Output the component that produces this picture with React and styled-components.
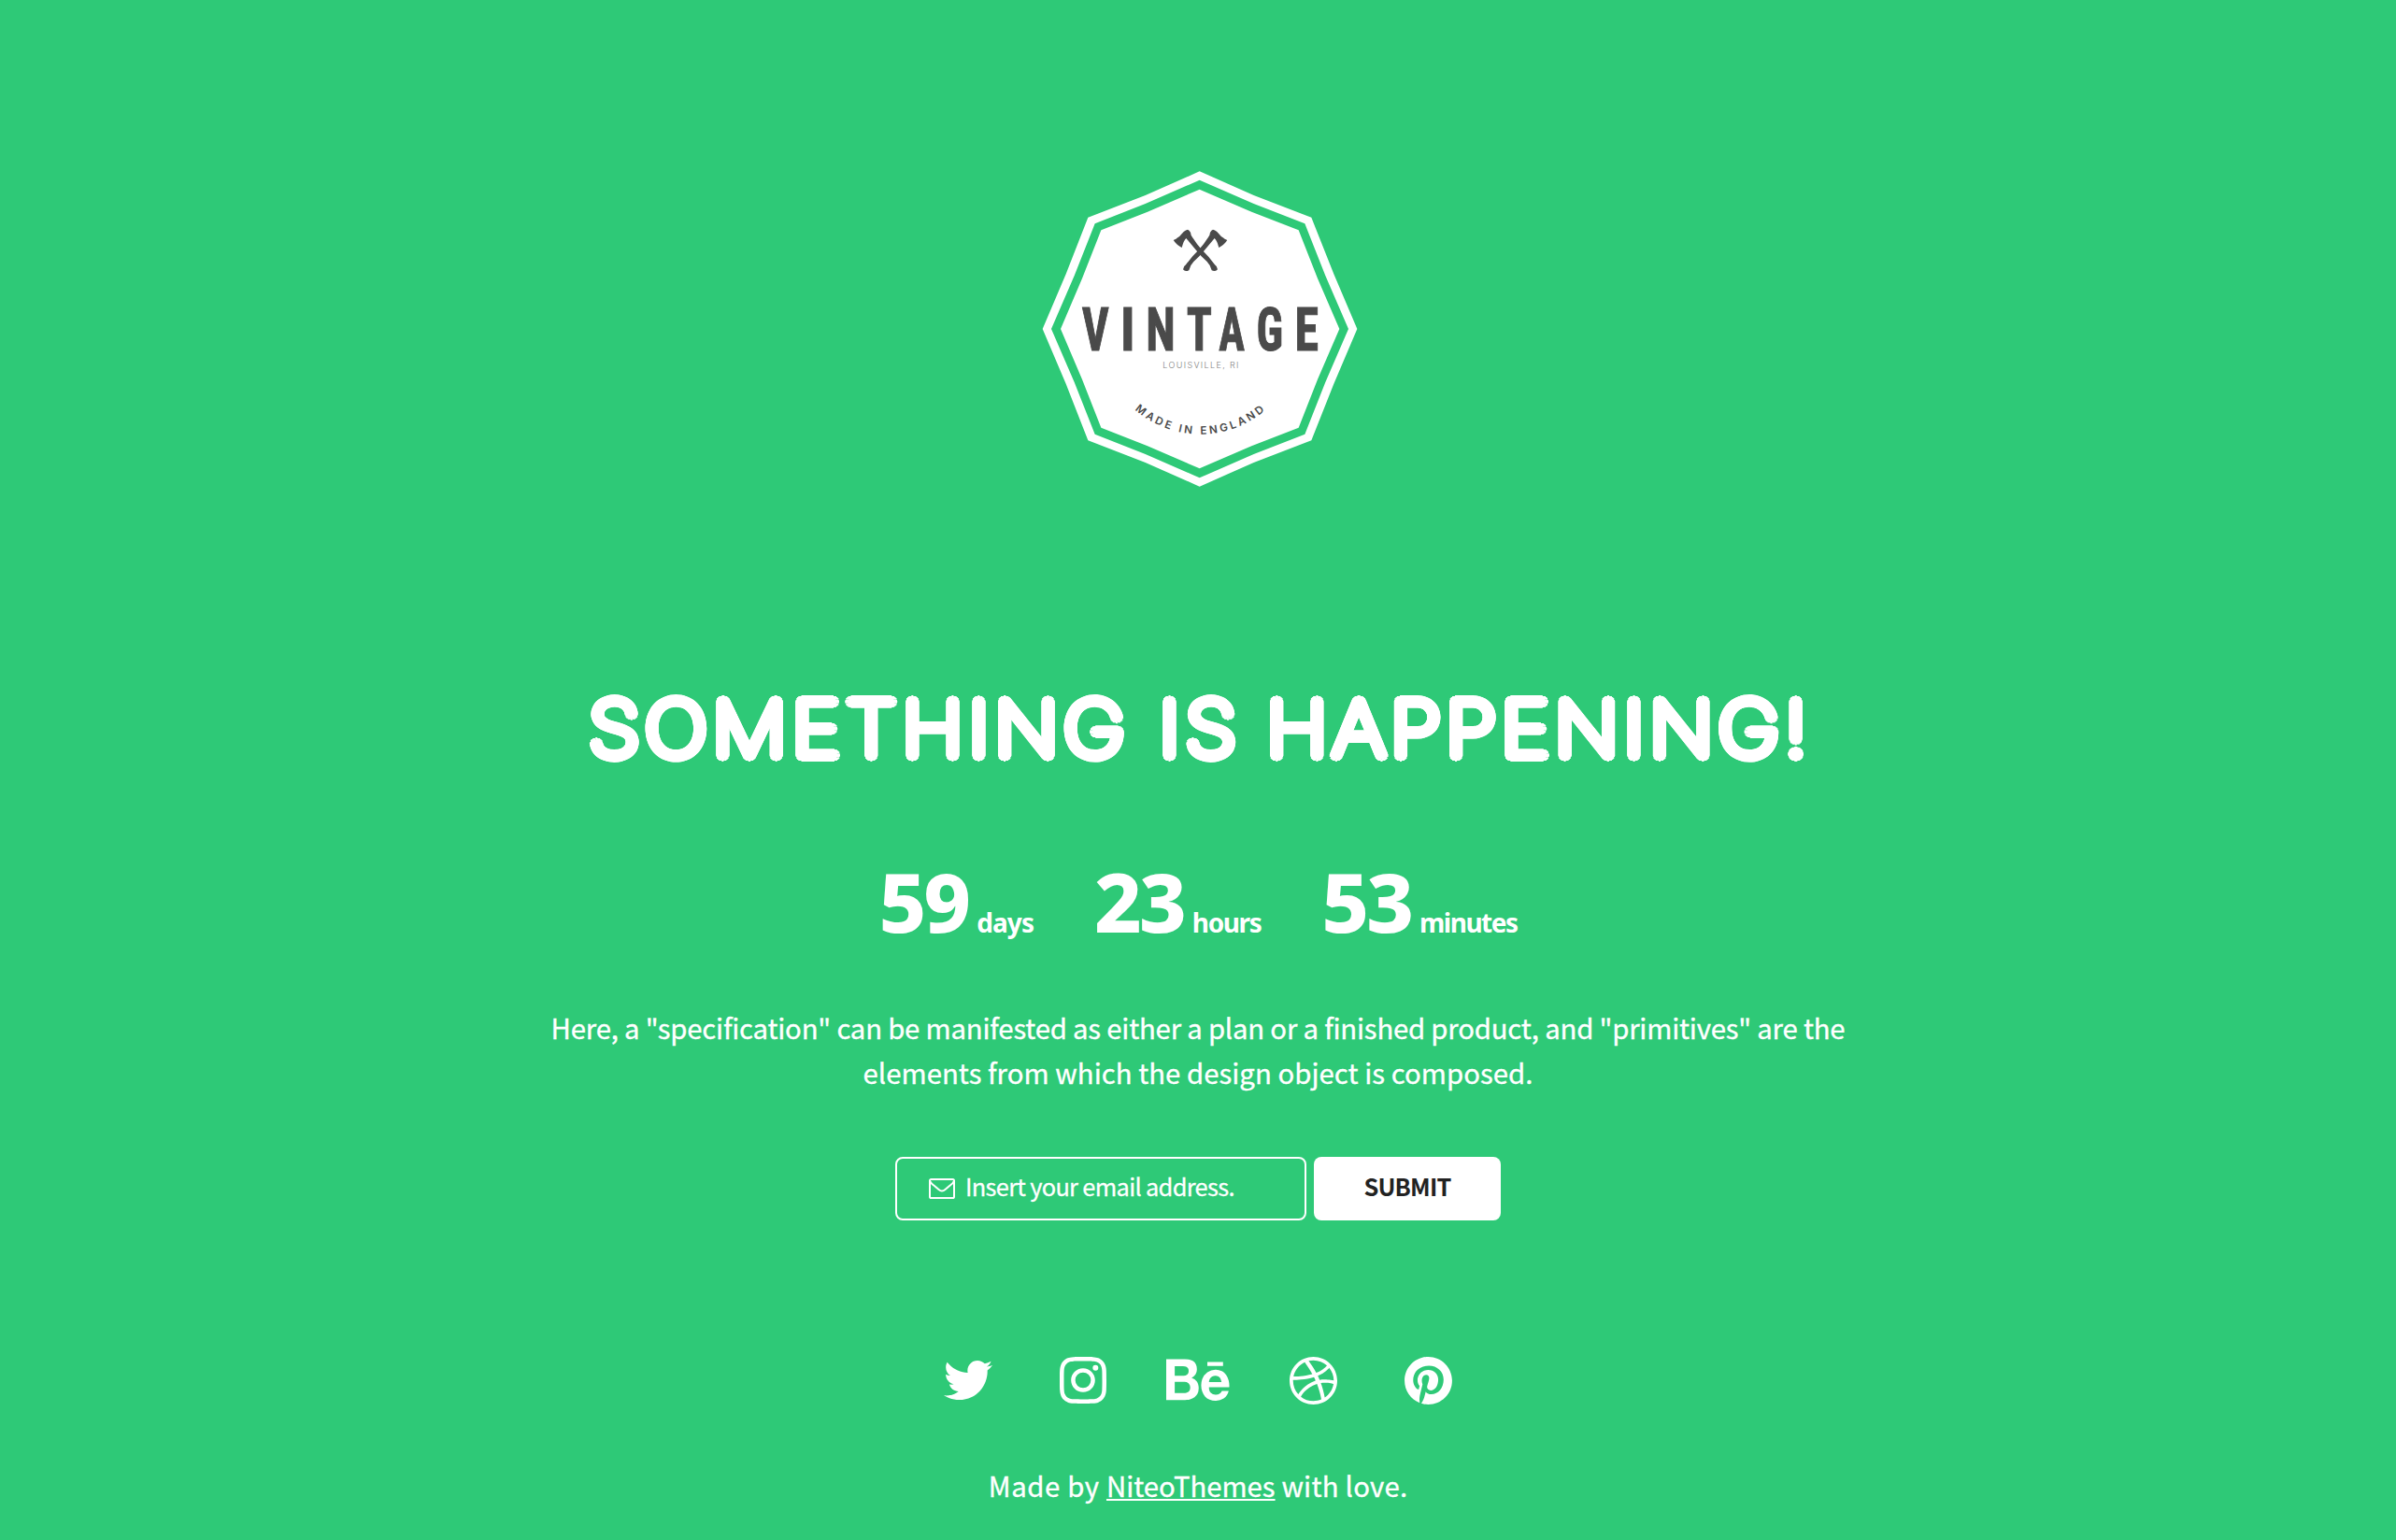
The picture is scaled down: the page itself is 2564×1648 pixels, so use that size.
import React from "react";
import styled, { createGlobalStyle } from "styled-components";
import { SiInstagram, SiBehance, SiDribbble, SiPinterest } from "react-icons/si";
import { FaTwitter } from "react-icons/fa";

const GREEN = "#2ec977";
const DARK = "#4a4a4a";

const GlobalStyle = createGlobalStyle`
  * { box-sizing: border-box; }
  body {
    margin: 0;
    background: ${GREEN};
    color: #fff;
    font-family: "Noto Sans CJK JP", "Noto Sans", sans-serif;
  }
  a { color: inherit; }
`;

const Page = styled.main`
  display: flex;
  flex-direction: column;
  align-items: center;
  min-height: 1648px;
  padding-top: 170px;
`;

const LogoSvg = styled.svg`
  display: block;
  width: 368px;
  height: 360px;
`;

/* Rounded strokes: a hairline face thickened evenly in every direction. */
const ring = (radius) =>
  Array.from({ length: 24 }, (_, i) => {
    const angle = (i * Math.PI) / 12;
    return `${(radius * Math.cos(angle)).toFixed(2)}px ${(radius * Math.sin(angle)).toFixed(2)}px 0 #fff`;
  }).join(", ");

const Title = styled.h1`
  display: flex;
  margin: 200px 0 0;
  font: 100 81.5px/100px Inter, sans-serif;
  text-shadow: ${ring(5.6)}, ${ring(2.8)};
  transform: scaleX(1.09);
`;

const Word = styled.span`
  letter-spacing: ${(p) => p.$spacing}px;
  margin-right: ${(p) => (p.$after || 0) - p.$spacing}px;
`;

const Counter = styled.div`
  display: flex;
  gap: 65px;
  height: 100px;
  margin-top: 84px;
  font-family: "Noto Sans", sans-serif;
`;

const Unit = styled.div`
  display: flex;
  align-items: baseline;
  gap: 9px;
`;

const Amount = styled.span`
  font-size: 88px;
  font-weight: 800;
  line-height: 100px;
  letter-spacing: -3px;
`;

const UnitName = styled.span`
  font-size: 28px;
  font-weight: 700;
  line-height: 32px;
  letter-spacing: ${(p) => p.$spacing}px;
`;

const Intro = styled.p`
  margin: 61px 0 0;
  text-align: center;
  font-size: 29.3px;
  line-height: 48px;
  -webkit-text-stroke: 0.35px #fff;
`;

const Line = styled.span`
  display: block;
  letter-spacing: ${(p) => p.$spacing}px;
`;

const Form = styled.form`
  display: flex;
  gap: 8px;
  margin-top: 67px;
`;

const Field = styled.label`
  display: flex;
  align-items: center;
  gap: 11px;
  width: 440px;
  height: 68px;
  padding-left: 34px;
  border: 2px solid #fff;
  border-radius: 8px;
  font-size: 25.4px;
  letter-spacing: -0.68px;
  -webkit-text-stroke: 0.3px #fff;
`;

const Placeholder = styled.span`
  padding-bottom: 6px;
`;

const Submit = styled.button`
  width: 200px;
  height: 68px;
  padding: 0 0 6px;
  border: 0;
  border-radius: 8px;
  background: #fff;
  color: #222;
  font: 700 25.4px/62px "Noto Sans CJK JP", "Noto Sans", sans-serif;
  letter-spacing: -0.8px;
`;

const Social = styled.nav`
  display: flex;
  margin-top: 146px;
`;

const SocialLink = styled.a`
  display: flex;
  align-items: center;
  justify-content: center;
  width: 123px;
  height: 50px;
`;

const Footer = styled.footer`
  margin-top: 63px;
  font-size: 29.3px;
  line-height: 48px;
  letter-spacing: 0.25px;
  -webkit-text-stroke: 0.35px #fff;

  a {
    letter-spacing: 0;
    text-decoration-thickness: 2px;
    text-underline-offset: 2px;
    text-decoration-skip-ink: none;
  }
`;

const Lead = styled.span`
  letter-spacing: 0.65px;
`;

const AXE =
  "M513 227 Q518 229 522 236 L524 245 Q540 272 557 290 Q581 313 600 340 Q610 347 608 356 Q600 363 590 358 Q586 341 575 330 Q554 311 540 293 L508 255 Q500 262 494 285 Q479 278 467 261 Q487 252 500 234 Q507 228 513 227 Z";

/* Each letter of the wordmark: glyph, centre and horizontal scale. */
const WORDMARK = [
  ["V", 216.5, 0.78],
  ["I", 320.5, 0.9],
  ["N", 426, 0.8],
  ["T", 550, 0.78],
  ["A", 654.5, 0.72],
  ["G", 776.5, 0.76],
  ["E", 895, 0.81],
];

function Logo() {
  return (
    <LogoSvg viewBox="-6 0 1104 1080" role="img" aria-label="Vintage">
      <polygon fill="#fff" points="551,40 725,117 910,188 982,370 1057,546 982,722 910,904 725,975 551,1052 377,975 193,904 122,722 47,546 122,370 193,188 377,117" />
      <polygon fill={GREEN} points="551,68 725,144 889,208 955,375 1029,546 955,717 889,884 725,948 551,1024 377,948 215,884 149,717 75,546 149,375 215,208 377,144" />
      <polygon fill="#fff" points="551,98 718,170 869,229 930,384 1000,546 930,708 869,863 718,922 551,994 384,922 235,863 174,708 105,546 174,384 235,229 384,170" />
      <path d={AXE} fill={DARK} />
      <path d={AXE} fill={DARK} transform="translate(1107 0) scale(-1 1)" />
      <g fill={DARK} stroke={DARK} strokeWidth="3" fontFamily="Roboto, sans-serif" fontWeight="700" fontSize="193" textAnchor="middle" style={{ fontStretch: "75%" }}>
        {WORDMARK.map(([letter, x, scale]) => (
          <text key={letter} transform={`translate(${x} 614) scale(${scale} 1)`}>{letter}</text>
        ))}
      </g>
      <text x="433" y="671" fill="#808080" fontFamily="Inter, sans-serif" fontWeight="300" fontSize="27" textLength="243">
        LOUISVILLE, RI
      </text>
      <path id="arc" d="M343 805 A321 321 0 0 0 763 806" fill="none" />
      <text fill={DARK} fontFamily="Inter, sans-serif" fontWeight="600" fontSize="35">
        <textPath href="#arc" textLength="454">MADE IN ENGLAND</textPath>
      </text>
    </LogoSvg>
  );
}

function Envelope() {
  return (
    <svg width="28" height="22" viewBox="0 0 28 22" fill="none" stroke="#fff" strokeWidth="2">
      <rect x="1" y="1" width="26" height="20" rx="1.6" />
      <path d="M1.4 3.2 C2 5 3.6 6.2 5 7.3 L10.6 11.9 C12.6 13.7 15.4 13.7 17.4 11.9 L23 7.3 C24.6 6.1 26 5 26.6 3.2" />
    </svg>
  );
}

const UNITS = [
  ["59", "days", -0.9],
  ["23", "hours", -1.4],
  ["53", "minutes", -1.5],
];

const LINKS = [
  ["Twitter", FaTwitter, 52],
  ["Instagram", SiInstagram, 50],
  ["Behance", SiBehance, 67.5],
  ["Dribbble", SiDribbble, 51],
  ["Pinterest", SiPinterest, 51],
];

export default function App() {
  return (
    <>
      <GlobalStyle />
      <Page>
        <Logo />
        <Title>
          <Word $spacing={5.2} $after={33.5}>SOMETHING</Word>
          <Word $spacing={5.6} $after={29.5}>IS</Word>
          <Word $spacing={4.9}>HAPPENING!</Word>
        </Title>
        <Counter>
          {UNITS.map(([amount, name, spacing]) => (
            <Unit key={name}>
              <Amount>{amount}</Amount>
              <UnitName $spacing={spacing}>{name}</UnitName>
            </Unit>
          ))}
        </Counter>
        <Intro>
          <Line $spacing={-0.19}>
            Here, a "specification" can be manifested as either a plan or a finished product, and "primitives" are the
          </Line>
          <Line $spacing={0.05}>elements from which the design object is composed.</Line>
        </Intro>
        <Form onSubmit={(e) => e.preventDefault()}>
          <Field>
            <Envelope />
            <Placeholder>Insert your email address.</Placeholder>
          </Field>
          <Submit>SUBMIT</Submit>
        </Form>
        <Social>
          {LINKS.map(([name, Icon, size]) => (
            <SocialLink key={name} href="#" aria-label={name}>
              <Icon size={size} />
            </SocialLink>
          ))}
        </Social>
        <Footer>
          <Lead>Made by </Lead>
          <a href="#">NiteoThemes</a> with love.
        </Footer>
      </Page>
    </>
  );
}
